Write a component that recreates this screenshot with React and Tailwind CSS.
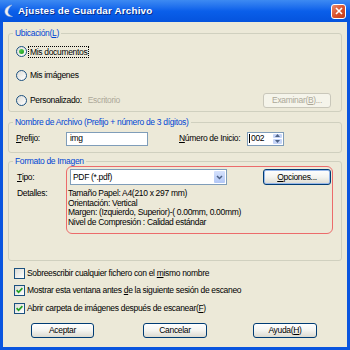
import React from "react";

const Radio = ({ checked }) => (
  <span className="w-[11px] h-[11px] rounded-full border border-[#1C5180] bg-linear-to-br from-[#DCDCD7] to-white flex items-center justify-center shrink-0">
    {checked && <span className="w-[5px] h-[5px] rounded-full bg-linear-to-br from-[#55D455] to-[#1A9A1A]" />}
  </span>
);

const Check = ({ checked }) => (
  <span className="w-[11px] h-[11px] border border-[#1C5180] bg-linear-to-br from-[#DCDCD7] to-white flex items-center justify-center shrink-0">
    {checked && (
      <svg width="7" height="7" viewBox="0 0 7 7">
        <path d="M0.6 3.2 L2.6 5.3 L6.4 1.2" stroke="#21A121" strokeWidth="1.7" fill="none" />
      </svg>
    )}
  </span>
);

const Btn = ({ children, className = "", disabled, active }) => (
  <div
    className={`h-[15px] rounded-[3px] border flex items-center justify-center shrink-0 ${
      disabled
        ? "border-[#C9C7BA] text-[#ACA899] bg-[#F5F4EA]"
        : "border-[#003C74] bg-linear-to-b from-white via-[#F4F4F0] to-[#DCDAD0]"
    } ${active ? "shadow-[inset_0_0_0_1px_#98B8EA]" : ""} ${className}`}
  >
    {children}
  </div>
);

const U = ({ children }) => <span className="underline underline-offset-1">{children}</span>;

const Group = ({ label, className = "", children }) => (
  <fieldset className={`border border-[#D0D0BF] rounded-[3px] ${className}`}>
    <legend className="ml-[4px] px-[2px] leading-[10px] text-[#0046D5]">{label}</legend>
    {children}
  </fieldset>
);

export default function App() {
  return (
    <div className="w-[350px] h-[350px] flex flex-col bg-[#0A55DF] overflow-hidden font-['Liberation_Sans',Arial,sans-serif] text-[8.5px] tracking-[-0.32px] text-black">
      {/* title bar */}
      <div className="h-[22px] shrink-0 flex items-center pl-[4px] pr-[4px] bg-linear-to-b from-[#3D8AF2] via-[#0A5FEA] to-[#0553DD]">
        <svg width="10" height="14" viewBox="0 0 10 14">
          <path d="M8 1 C3 2 0.5 5 1 8.5 C1.5 11 4 13 8.5 12.5 C5 11.5 3.5 9.5 4 7 C4.5 4.5 6 2.5 8 1 Z" fill="#F2F2F2" stroke="#9DB4DA" strokeWidth="0.6" />
        </svg>
        <span className="ml-[4px] text-white font-bold text-[9.8px] tracking-[0.2px] [text-shadow:1px_1px_0_#0A2E8A]">
          Ajustes de Guardar Archivo
        </span>
        <div className="ml-auto w-[15px] h-[15px] rounded-[3px] border border-white bg-linear-to-br from-[#E88A6E] via-[#D9532E] to-[#C23A17] flex items-center justify-center">
          <svg width="8" height="8" viewBox="0 0 8 8">
            <path d="M1 1 L7 7 M7 1 L1 7" stroke="white" strokeWidth="1.6" />
          </svg>
        </div>
      </div>

      {/* body */}
      <div className="flex-1 mx-[3px] mb-[3px] bg-[#ECE9D8] px-[5px] flex flex-col">
        <Group label={<>Ubicación(<U>L</U>)</>} className="mt-[6px]">
          <div className="flex flex-col gap-[11px] pt-[7px] pb-[3px] pl-[7px] pr-[10px]">
            <div className="h-[13px] flex items-center gap-[1px]">
              <Radio checked />
              <span className="border border-dotted border-black px-[1px] leading-[10px]">Mis documentos</span>
            </div>
            <div className="h-[13px] flex items-center gap-[2px]">
              <Radio />
              <span className="pl-[1px]">Mis imágenes</span>
            </div>
            <div className="h-[15px] flex items-center gap-[2px]">
              <Radio />
              <span className="pl-[1px]">Personalizado:</span>
              <span className="ml-[4px] text-[#ACA899]">Escritorio</span>
              <Btn disabled className="ml-auto w-[68px]">
                Examinar(<U>B</U>)...
              </Btn>
            </div>
          </div>
        </Group>

        <Group label="Nombre de Archivo (Prefijo + número de 3 dígitos)" className="mt-[5px]">
          <div className="flex items-center pt-[4px] pb-[6px] pl-[7px] h-[15px] box-content">
            <span className="w-[50px]">
              <U>P</U>refijo:
            </span>
            <div className="w-[82px] h-[14px] border border-[#7F9DB9] bg-white flex items-center pl-[3px]">img</div>
            <span className="ml-[31px] w-[68px]">
              <U>N</U>úmero de Inicio:
            </span>
            <div className="w-[37px] h-[14px] border border-[#7F9DB9] bg-white flex items-center">
              <span className="flex-1 flex items-center pl-[1px]">
                <span className="w-px h-[9px] bg-black mr-[1px]" />
                002
              </span>
              <div className="w-[11px] h-full flex flex-col gap-px p-px">
                <div className="flex-1 bg-[#C6D5F7] rounded-[1px] flex items-center justify-center">
                  <svg width="5" height="3" viewBox="0 0 5 3"><path d="M0 3 L2.5 0 L5 3Z" fill="#4D6185" /></svg>
                </div>
                <div className="flex-1 bg-[#C6D5F7] rounded-[1px] flex items-center justify-center">
                  <svg width="5" height="3" viewBox="0 0 5 3"><path d="M0 0 L2.5 3 L5 0Z" fill="#4D6185" /></svg>
                </div>
              </div>
            </div>
          </div>
        </Group>

        <Group label="Formato de Imagen" className="mt-[3px]">
          <div className="flex pb-[26px]">
            <div className="w-[57px] pl-[8px] pt-[3px] shrink-0">
              <div className="h-[16px] flex items-center">
                <U>T</U>ipo:
              </div>
              <div className="mt-[4px] leading-[9.7px]">Detalles:</div>
            </div>
            <div className="w-[267px] border border-[#EC6B6B] rounded-[6px] pt-[2px] pl-[1px] pr-px pb-[5px]">
              <div className="flex items-center ml-[2px]">
                <div className="w-[157px] h-[16px] border border-[#7F9DB9] bg-white flex items-center">
                  <span className="flex-1 pl-[2px]">PDF (*.pdf)</span>
                  <div className="w-[13px] h-full p-px">
                    <div className="h-full rounded-[1px] bg-linear-to-b from-[#D6E2FC] to-[#B2C7F6] flex items-center justify-center">
                      <svg width="7" height="5" viewBox="0 0 7 5"><path d="M1 1 L3.5 3.5 L6 1" stroke="#4D6185" strokeWidth="1.5" fill="none" /></svg>
                    </div>
                  </div>
                </div>
                <Btn active className="ml-auto w-[68px] h-[16px]">
                  <U>O</U>pciones...
                </Btn>
              </div>
              <div className="mt-[4px] leading-[9.7px]">
                <div>Tamaño Papel: A4(210 x 297 mm)</div>
                <div>Orientación: Vertical</div>
                <div>Margen: (Izquierdo, Superior)-( 0.00mm, 0.00mm)</div>
                <div>Nivel de Compresión : Calidad estándar</div>
              </div>
            </div>
          </div>
        </Group>

        <div className="mt-[7px] pl-[6px] flex flex-col gap-[6.5px]">
          <div className="h-[11px] flex items-center gap-[2px]">
            <Check />
            <span>
              Sobreescribir cualquier fichero con el <U>m</U>ismo nombre
            </span>
          </div>
          <div className="h-[11px] flex items-center gap-[2px]">
            <Check checked />
            <span>
              Mostrar esta ventana antes <U>d</U>e la siguiente sesión de escaneo
            </span>
          </div>
          <div className="h-[11px] flex items-center gap-[2px]">
            <Check checked />
            <span>
              Abrir carpeta de imágenes después de escanear(<U>F</U>)
            </span>
          </div>
        </div>

        <div className="mt-[9px] pl-[23px] flex">
          <Btn className="w-[63px]">Aceptar</Btn>
          <Btn className="ml-[49px] w-[64px]">Cancelar</Btn>
          <Btn className="ml-[46px] w-[64px]">
            Ayuda(<U>H</U>)
          </Btn>
        </div>
      </div>
    </div>
  );
}
